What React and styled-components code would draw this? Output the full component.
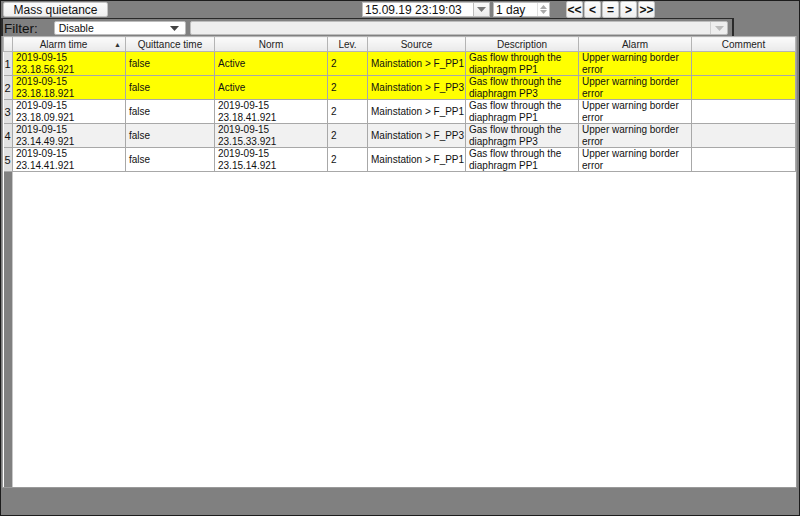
import React from 'react';
import styled, { createGlobalStyle } from 'styled-components';

const GlobalStyle = createGlobalStyle`
  html, body {
    margin: 0;
    padding: 0;
    background: #808080;
  }
  * { box-sizing: border-box; }
`;

const Page = styled.div`
  width: 800px;
  height: 516px;
  border: 1px solid #1c1c1c;
  background: #808080;
  display: flex;
  flex-direction: column;
  font-family: "Liberation Sans", Arial, sans-serif;
  color: #111;
`;

const Toolbar = styled.div`
  height: 17px;
  display: flex;
  align-items: center;
  padding-left: 2px;
`;

const PlainButton = styled.button`
  height: 15px;
  width: ${p => p.$w}px;
  padding: 0;
  background: linear-gradient(#fcfcfc, #efefef);
  border: 1px solid #c4c4c4;
  border-radius: 2px;
  font-family: inherit;
  font-size: 12px;
  font-weight: ${p => (p.$bold ? 700 : 400)};
  color: #111;
  line-height: 12px;
  display: flex;
  align-items: center;
  justify-content: center;
`;

const DateGroup = styled.div`
  display: flex;
  align-items: center;
  margin-left: 254px;
  height: 15px;
`;

const Field = styled.div`
  height: 15px;
  width: ${p => p.$w}px;
  background: #fff;
  border: 1px solid #bdbdbd;
  font-size: 12px;
  line-height: 12px;
  padding-left: 2px;
  display: flex;
  align-items: center;
  justify-content: space-between;
`;

const DropButton = styled.div`
  width: 16px;
  height: 15px;
  background: linear-gradient(#fafafa, #ececec);
  border: 1px solid #bdbdbd;
  border-left: none;
  display: flex;
  align-items: center;
  justify-content: center;
  margin-right: 3px;
`;

const Spin = styled.div`
  width: 12px;
  height: 13px;
  display: flex;
  flex-direction: column;
  align-items: center;
  justify-content: center;
  gap: 1px;
  border-left: 1px solid #e0e0e0;
`;

const NavGroup = styled.div`
  display: flex;
  gap: 1px;
  margin-left: 16px;
  height: 17px;
`;

const NavButton = styled(PlainButton)`
  height: 17px;
`;

const FilterBar = styled.div`
  height: 18px;
  width: 733px;
  border-top: 1px solid #2a2a2a;
  border-left: 2px solid #2a2a2a;
  border-right: 2px solid #2a2a2a;
  display: flex;
  align-items: center;
  padding: 1px 0 0 1px;
`;

const FilterLabel = styled.span`
  font-size: 13.5px;
  width: 50px;
  color: #111;
`;

const Combo = styled.div`
  height: 14px;
  width: ${p => p.$w}px;
  margin-right: 4px;
  background: ${p => (p.$disabled ? '#eeeeee' : '#ffffff')};
  border: 1px solid #bcbcbc;
  border-radius: 2px;
  display: flex;
  align-items: center;
  justify-content: space-between;
  font-size: 10.5px;
  padding-left: 4px;
`;

const ComboArrow = styled.div`
  width: ${p => (p.$split ? 17 : 22)}px;
  height: 12px;
  display: flex;
  align-items: center;
  justify-content: center;
  border-left: ${p => (p.$split ? '1px solid #cfcfcf' : 'none')};
`;

const Frame = styled.div`
  height: 452px;
  margin: 0 2px 0 1px;
  border: 1px solid #9a9a9a;
  border-top: none;
  background: #fff;
`;

const Grid = styled.table`
  width: 100%;
  height: 100%;
  border-collapse: collapse;
  table-layout: fixed;
  font-size: 10px;
`;

const HeadCell = styled.th`
  height: 15px;
  padding: 0;
  font-weight: 400;
  font-size: 10px;
  color: #222;
  background: linear-gradient(#fbfbfb, #e9e9e9);
  border: 1px solid #b4b4b4;
  text-align: center;
  line-height: 13px;
  white-space: nowrap;
`;

const SortArrow = styled.span`
  float: right;
  margin-right: 4px;
  font-size: 7px;
  line-height: 13px;
  color: #333;
`;

const Row = styled.tr`
  height: 24px;
  background: ${p => (p.$active ? '#ffff00' : p.$odd ? '#f1f1f1' : '#ffffff')};
`;

const NumCell = styled.td`
  padding: 0 0 0 1px;
  background: #e2e2e2;
  border: 1px solid #a8a8a8;
  border-left: none;
  font-size: 11px;
  vertical-align: middle;
`;

const Cell = styled.td`
  padding: 0 3px;
  border: 1px solid #a8a8a8;
  line-height: 11.5px;
  vertical-align: middle;
  overflow: hidden;
  white-space: nowrap;
  color: #111;
`;

const Gutter = styled.td`
  background: #808080;
  border-right: 1px solid #c8c8c8;
  padding: 0;
`;

const Blank = styled.td`
  padding: 0;
  border: none;
`;

const BottomSpace = styled.div`
  flex: 1;
`;

const Caret = ({ color = '#333' }) => (
  <svg width="9" height="5" viewBox="0 0 9 5">
    <path d="M0 0 L9 0 L4.5 5 Z" fill={color} />
  </svg>
);

const columns = [
  { key: 'time', label: 'Alarm time', width: 113, sort: true },
  { key: 'quit', label: 'Quittance time', width: 89 },
  { key: 'norm', label: 'Norm', width: 113 },
  { key: 'lev', label: 'Lev.', width: 40 },
  { key: 'src', label: 'Source', width: 98 },
  { key: 'desc', label: 'Description', width: 113 },
  { key: 'alarm', label: 'Alarm', width: 113 },
  { key: 'comment', label: 'Comment' },
];

const rows = [
  { time: ['2019-09-15', '23.18.56.921'], norm: ['Active'], src: 'Mainstation > F_PP1', pp: 'PP1', active: true },
  { time: ['2019-09-15', '23.18.18.921'], norm: ['Active'], src: 'Mainstation > F_PP3', pp: 'PP3', active: true },
  { time: ['2019-09-15', '23.18.09.921'], norm: ['2019-09-15', '23.18.41.921'], src: 'Mainstation > F_PP1', pp: 'PP1' },
  { time: ['2019-09-15', '23.14.49.921'], norm: ['2019-09-15', '23.15.33.921'], src: 'Mainstation > F_PP3', pp: 'PP3' },
  { time: ['2019-09-15', '23.14.41.921'], norm: ['2019-09-15', '23.15.14.921'], src: 'Mainstation > F_PP1', pp: 'PP1' },
];

const Lines = ({ lines }) => lines.map((l, i) => <div key={i}>{l}</div>);

export default function App() {
  return (
    <>
      <GlobalStyle />
      <Page>
        <Toolbar>
          <PlainButton $w={105}>Mass quietance</PlainButton>
          <DateGroup>
            <Field $w={112}>15.09.19 23:19:03</Field>
            <DropButton><Caret color="#777" /></DropButton>
            <Field $w={57}>
              1 day
              <Spin>
                <svg width="7" height="4" viewBox="0 0 7 4"><path d="M0 4 L7 4 L3.5 0 Z" fill="#aaa" /></svg>
                <svg width="7" height="4" viewBox="0 0 7 4"><path d="M0 0 L7 0 L3.5 4 Z" fill="#aaa" /></svg>
              </Spin>
            </Field>
          </DateGroup>
          <NavGroup>
            <NavButton $w={17} $bold>&lt;&lt;</NavButton>
            <NavButton $w={17} $bold>&lt;</NavButton>
            <NavButton $w={17} $bold>=</NavButton>
            <NavButton $w={17} $bold>&gt;</NavButton>
            <NavButton $w={17} $bold>&gt;&gt;</NavButton>
          </NavGroup>
        </Toolbar>

        <FilterBar>
          <FilterLabel>Filter:</FilterLabel>
          <Combo $w={133}>
            Disable
            <ComboArrow><Caret color="#444" /></ComboArrow>
          </Combo>
          <Combo $w={541} $disabled>
            <span />
            <ComboArrow $split><Caret color="#bbb" /></ComboArrow>
          </Combo>
        </FilterBar>

        <Frame>
          <Grid>
            <colgroup>
              <col style={{ width: 9 }} />
              {columns.map(c => (
                <col key={c.key} style={c.width ? { width: c.width } : undefined} />
              ))}
            </colgroup>
            <thead>
              <tr>
                <HeadCell />
                {columns.map(c => (
                  <HeadCell key={c.key}>
                    {c.sort && <SortArrow>▲</SortArrow>}
                    {c.label}
                  </HeadCell>
                ))}
              </tr>
            </thead>
            <tbody>
              {rows.map((r, i) => (
                <Row key={i} $active={r.active} $odd={i % 2 === 1}>
                  <NumCell>{i + 1}</NumCell>
                  <Cell><Lines lines={r.time} /></Cell>
                  <Cell>false</Cell>
                  <Cell><Lines lines={r.norm} /></Cell>
                  <Cell>2</Cell>
                  <Cell>{r.src}</Cell>
                  <Cell><Lines lines={['Gas flow through the', `diaphragm ${r.pp}`]} /></Cell>
                  <Cell><Lines lines={['Upper warning border', 'error']} /></Cell>
                  <Cell />
                </Row>
              ))}
              <tr>
                <Gutter />
                <Blank colSpan={8} />
              </tr>
            </tbody>
          </Grid>
        </Frame>
        <BottomSpace />
      </Page>
    </>
  );
}
